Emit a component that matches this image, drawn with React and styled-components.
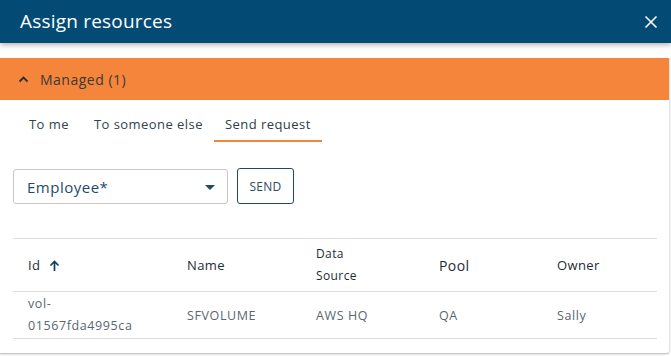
import React from "react";
import styled, { createGlobalStyle } from "styled-components";

const Global = createGlobalStyle`
  html, body {
    margin: 0;
    padding: 0;
    background: #ffffff;
    font-family: "Open Sans", "Noto Sans", sans-serif;
  }
`;

const columns = [
  { key: "id", label: "Id", width: 159, sort: true },
  { key: "name", label: "Name", width: 129 },
  { key: "source", label: ["Data", "Source"], width: 123, small: true },
  { key: "pool", label: "Pool", width: 118, big: true },
  { key: "owner", label: "Owner", width: 100 },
];

const rows = [
  { id: ["vol-", "01567fda4995ca"], name: "SFVOLUME", source: "AWS HQ", pool: "QA", owner: "Sally" },
];

const App = () => {
  return (
    <>
      <Global />
      <Dialog>
        <Header>
          <Title>Assign resources</Title>
          <Close aria-label="close">
            <svg width="14" height="14" viewBox="0 0 14 14">
              <path d="M1.5 1.5 L12.5 12.5 M12.5 1.5 L1.5 12.5" stroke="#fff" strokeWidth="1.6" />
            </svg>
          </Close>
        </Header>
        <Body>
          <Accordion>
            <svg width="11" height="8" viewBox="0 0 11 8">
              <path d="M1.5 6.5 L5.5 2.5 L9.5 6.5" stroke="#2d2d2d" strokeWidth="1.8" fill="none" />
            </svg>
            <AccTitle>Managed (1)</AccTitle>
          </Accordion>
          <Tabs>
            <Tab>To me</Tab>
            <Tab>To someone else</Tab>
            <Tab active>Send request</Tab>
          </Tabs>
          <FormRow>
            <Select>
              <span>Employee*</span>
              <svg width="10" height="6" viewBox="0 0 10 6">
                <path d="M0 0 L10 0 L5 5 Z" fill="#1f4a66" />
              </svg>
            </Select>
            <SendButton>SEND</SendButton>
          </FormRow>
          <Table>
            <HeadRow>
              {columns.map((c) => (
                <HeadCell key={c.key} width={c.width} small={c.small} big={c.big}>
                  {Array.isArray(c.label) ? (
                    <Stack>
                      {c.label.map((l) => (
                        <span key={l}>{l}</span>
                      ))}
                    </Stack>
                  ) : (
                    c.label
                  )}
                  {c.sort && (
                    <SortIcon width="11" height="12" viewBox="0 0 11 12">
                      <path d="M5.5 11 L5.5 1.5 M1.5 5.5 L5.5 1.5 L9.5 5.5" stroke="#0e3f5e" strokeWidth="1.7" fill="none" />
                    </SortIcon>
                  )}
                </HeadCell>
              ))}
            </HeadRow>
            {rows.map((r) => (
              <BodyRow key={r.name}>
                {columns.map((c) => (
                  <Cell key={c.key} width={c.width}>
                    {Array.isArray(r[c.key]) ? (
                      <Stack>
                        {r[c.key].map((l) => (
                          <span key={l}>{l}</span>
                        ))}
                      </Stack>
                    ) : (
                      r[c.key]
                    )}
                  </Cell>
                ))}
              </BodyRow>
            ))}
          </Table>
        </Body>
      </Dialog>
    </>
  );
};

export default App;

const Dialog = styled.div`
  width: 671px;
  height: 356px;
  display: flex;
  flex-direction: column;
  background: #fff;
  overflow: hidden;
`;

const Header = styled.div`
  height: 43px;
  flex-shrink: 0;
  background: #034b74;
  display: flex;
  align-items: center;
  justify-content: space-between;
  padding: 0 13px 0 20px;
  box-shadow: 0 2px 5px rgba(0, 0, 0, 0.3);
  position: relative;
  z-index: 1;
`;

const Title = styled.h1`
  margin: 0;
  color: #fff;
  font-family: "Open Sans", sans-serif;
  font-weight: 400;
  font-size: 19px;
  letter-spacing: 0.2px;
  padding-bottom: 2px;
`;

const Close = styled.button`
  border: 0;
  background: none;
  padding: 0;
  display: flex;
  cursor: pointer;
`;

const Body = styled.div`
  margin-top: 15px;
  width: 669px;
  height: 295px;
  border-bottom: 1px solid #c8c8c8;
  border-right: 1px solid #e2e2e2;
  border-bottom-right-radius: 4px;
  box-shadow: 0 1px 2px rgba(0, 0, 0, 0.12);
`;

const Accordion = styled.div`
  height: 42px;
  background: #f5853a;
  display: flex;
  align-items: center;
  gap: 11px;
  padding-left: 18px;
`;

const AccTitle = styled.span`
  font-size: 14px;
  letter-spacing: 0.5px;
  color: #3a3a3a;
  font-family: "Open Sans", sans-serif;
`;

const Tabs = styled.div`
  display: flex;
  padding: 13px 0 0 18px;
  gap: 0;
`;

const Tab = styled.div`
  font-size: 13px;
  letter-spacing: 0.45px;
  color: ${(p) => (p.active ? "#2b3d4a" : "#30444f")};
  padding: 2px 11px 7px;
  border-bottom: 2px solid ${(p) => (p.active ? "#f5853a" : "transparent")};
  &:first-child {
    padding-right: 14px;
  }
`;

const FormRow = styled.div`
  display: flex;
  align-items: center;
  gap: 9px;
  padding: 27px 0 0 13px;
`;

const Select = styled.div`
  width: 215px;
  height: 35px;
  box-sizing: border-box;
  border: 1px solid #c8c8c8;
  border-radius: 3px;
  display: flex;
  align-items: center;
  justify-content: space-between;
  padding: 0 12px 0 13px;
  font-size: 15px;
  letter-spacing: 0.5px;
  color: #1f4a66;
  svg {
    margin-top: 2px;
  }
`;

const SendButton = styled.button`
  width: 57px;
  height: 36px;
  margin-top: -1px;
  border: 1px solid #1f4a66;
  border-radius: 3px;
  background: #fff;
  color: #2e4b5e;
  font-family: "Open Sans", sans-serif;
  font-size: 12px;
  letter-spacing: 0.3px;
  padding: 0;
`;

const Table = styled.div`
  margin: 34px 0 0 13px;
  width: 644px;
  border-top: 1px solid #dedede;
`;

const HeadRow = styled.div`
  display: flex;
  height: 52px;
  border-bottom: 1px solid #dedede;
`;

const BodyRow = styled.div`
  display: flex;
  height: 46px;
  border-bottom: 1px solid #dedede;
`;

const HeadCell = styled.div`
  width: ${(p) => p.width}px;
  padding-left: 15px;
  box-sizing: border-box;
  display: flex;
  align-items: center;
  gap: 9px;
  font-size: ${(p) => (p.small ? "12px" : p.big ? "14px" : "13px")};
  letter-spacing: 0.4px;
  font-weight: 500;
  color: #1e2c36;
`;

const Cell = styled.div`
  width: ${(p) => p.width}px;
  padding-left: 15px;
  box-sizing: border-box;
  display: flex;
  align-items: center;
  font-size: 12.5px;
  letter-spacing: 0.6px;
  color: #5a666e;
`;

const Stack = styled.div`
  display: flex;
  flex-direction: column;
  line-height: 22px;
`;

const SortIcon = styled.svg`
  margin-top: 1px;
`;
